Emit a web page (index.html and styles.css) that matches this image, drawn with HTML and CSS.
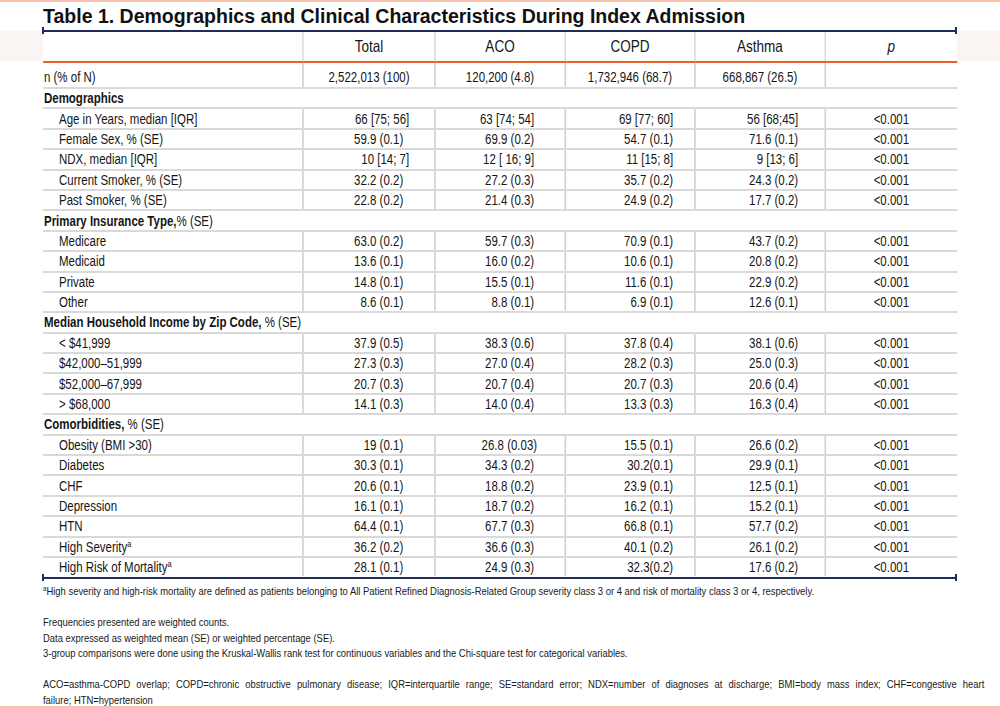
FILE: index.html
```html
<!DOCTYPE html>
<html lang="en">
<head>
<meta charset="utf-8">
<title>Table 1</title>
<link rel="stylesheet" href="styles.css">
</head>
<body>
<div class="page">
  <h1 class="title">Table 1. Demographics and Clinical Characteristics During Index Admission</h1>
  <div class="rule rule-top"></div>
  <div class="table-box">
  <table class="data">
    <colgroup>
      <col class="c-label"><col class="c-num"><col class="c-num2"><col class="c-num2"><col class="c-num2"><col class="c-num">
    </colgroup>
    <thead>
      <tr>
        <th></th>
        <th>Total</th>
        <th>ACO</th>
        <th>COPD</th>
        <th>Asthma</th>
        <th><i>p</i></th>
      </tr>
    </thead>
    <tbody>
      <tr class="n-row">
        <td class="lbl flush">n (% of N)</td>
        <td>2,522,013 (100)</td>
        <td>120,200 (4.8)</td>
        <td>1,732,946 (68.7)</td>
        <td>668,867 (26.5)</td>
        <td></td>
      </tr>
      <tr class="sec"><td colspan="6"><b>Demographics</b></td></tr>
      <tr><td class="lbl">Age in Years, median [IQR]</td><td class="v1 off">66 [75; 56]</td><td class="v2">63 [74; 54]</td><td class="v3">69 [77; 60]</td><td class="v4">56 [68;45]</td><td class="pv">&lt;0.001</td></tr>
      <tr><td class="lbl">Female Sex, % (SE)</td><td class="v1">59.9 (0.1)</td><td class="v2">69.9 (0.2)</td><td class="v3">54.7 (0.1)</td><td class="v4">71.6 (0.1)</td><td class="pv">&lt;0.001</td></tr>
      <tr><td class="lbl">NDX, median [IQR]</td><td class="v1 off">10 [14; 7]</td><td class="v2">12 [ 16; 9]</td><td class="v3">11 [15; 8]</td><td class="v4">9 [13; 6]</td><td class="pv">&lt;0.001</td></tr>
      <tr><td class="lbl">Current Smoker, % (SE)</td><td class="v1">32.2 (0.2)</td><td class="v2">27.2 (0.3)</td><td class="v3">35.7 (0.2)</td><td class="v4">24.3 (0.2)</td><td class="pv">&lt;0.001</td></tr>
      <tr><td class="lbl">Past Smoker, % (SE)</td><td class="v1">22.8 (0.2)</td><td class="v2">21.4 (0.3)</td><td class="v3">24.9 (0.2)</td><td class="v4">17.7 (0.2)</td><td class="pv">&lt;0.001</td></tr>
      <tr class="sec"><td colspan="6"><b>Primary Insurance Type,</b>% (SE)</td></tr>
      <tr><td class="lbl">Medicare</td><td class="v1">63.0 (0.2)</td><td class="v2">59.7 (0.3)</td><td class="v3">70.9 (0.1)</td><td class="v4">43.7 (0.2)</td><td class="pv">&lt;0.001</td></tr>
      <tr><td class="lbl">Medicaid</td><td class="v1">13.6 (0.1)</td><td class="v2">16.0 (0.2)</td><td class="v3">10.6 (0.1)</td><td class="v4">20.8 (0.2)</td><td class="pv">&lt;0.001</td></tr>
      <tr><td class="lbl">Private</td><td class="v1">14.8 (0.1)</td><td class="v2">15.5 (0.1)</td><td class="v3">11.6 (0.1)</td><td class="v4">22.9 (0.2)</td><td class="pv">&lt;0.001</td></tr>
      <tr><td class="lbl">Other</td><td class="v1">8.6 (0.1)</td><td class="v2">8.8 (0.1)</td><td class="v3">6.9 (0.1)</td><td class="v4">12.6 (0.1)</td><td class="pv">&lt;0.001</td></tr>
      <tr class="sec"><td colspan="6"><b>Median Household Income by Zip Code,</b> % (SE)</td></tr>
      <tr><td class="lbl">&lt; $41,999</td><td class="v1">37.9 (0.5)</td><td class="v2">38.3 (0.6)</td><td class="v3">37.8 (0.4)</td><td class="v4">38.1 (0.6)</td><td class="pv">&lt;0.001</td></tr>
      <tr><td class="lbl">$42,000–51,999</td><td class="v1">27.3 (0.3)</td><td class="v2">27.0 (0.4)</td><td class="v3">28.2 (0.3)</td><td class="v4">25.0 (0.3)</td><td class="pv">&lt;0.001</td></tr>
      <tr><td class="lbl">$52,000–67,999</td><td class="v1">20.7 (0.3)</td><td class="v2">20.7 (0.4)</td><td class="v3">20.7 (0.3)</td><td class="v4">20.6 (0.4)</td><td class="pv">&lt;0.001</td></tr>
      <tr><td class="lbl">&gt; $68,000</td><td class="v1">14.1 (0.3)</td><td class="v2">14.0 (0.4)</td><td class="v3">13.3 (0.3)</td><td class="v4">16.3 (0.4)</td><td class="pv">&lt;0.001</td></tr>
      <tr class="sec"><td colspan="6"><b>Comorbidities,</b> % (SE)</td></tr>
      <tr><td class="lbl">Obesity (BMI &gt;30)</td><td class="v1">19 (0.1)</td><td class="v2 off">26.8 (0.03)</td><td class="v3">15.5 (0.1)</td><td class="v4">26.6 (0.2)</td><td class="pv">&lt;0.001</td></tr>
      <tr><td class="lbl">Diabetes</td><td class="v1">30.3 (0.1)</td><td class="v2">34.3 (0.2)</td><td class="v3">30.2(0.1)</td><td class="v4">29.9 (0.1)</td><td class="pv">&lt;0.001</td></tr>
      <tr><td class="lbl">CHF</td><td class="v1">20.6 (0.1)</td><td class="v2">18.8 (0.2)</td><td class="v3">23.9 (0.1)</td><td class="v4">12.5 (0.1)</td><td class="pv">&lt;0.001</td></tr>
      <tr><td class="lbl">Depression</td><td class="v1">16.1 (0.1)</td><td class="v2">18.7 (0.2)</td><td class="v3">16.2 (0.1)</td><td class="v4">15.2 (0.1)</td><td class="pv">&lt;0.001</td></tr>
      <tr><td class="lbl">HTN</td><td class="v1">64.4 (0.1)</td><td class="v2">67.7 (0.3)</td><td class="v3">66.8 (0.1)</td><td class="v4">57.7 (0.2)</td><td class="pv">&lt;0.001</td></tr>
      <tr><td class="lbl">High Severity<sup>a</sup></td><td class="v1">36.2 (0.2)</td><td class="v2">36.6 (0.3)</td><td class="v3">40.1 (0.2)</td><td class="v4">26.1 (0.2)</td><td class="pv">&lt;0.001</td></tr>
      <tr class="last"><td class="lbl">High Risk of Mortality<sup>a</sup></td><td class="v1">28.1 (0.1)</td><td class="v2">24.9 (0.3)</td><td class="v3">32.3(0.2)</td><td class="v4">17.6 (0.2)</td><td class="pv">&lt;0.001</td></tr>
    </tbody>
  </table>
  </div>
  <div class="rule rule-bottom"></div>
  <div class="notes">
    <p><sup>a</sup>High severity and high-risk mortality are defined as patients belonging to All Patient Refined Diagnosis-Related Group severity class 3 or 4 and risk of mortality class 3 or 4, respectively.</p>
    <p>Frequencies presented are weighted counts.<br>Data expressed as weighted mean (SE) or weighted percentage (SE).<br>3-group comparisons were done using the Kruskal-Wallis rank test for continuous variables and the Chi-square test for categorical variables.</p>
    <p><span class="jline">ACO=asthma-COPD overlap; COPD=chronic obstructive pulmonary disease; IQR=interquartile range; SE=standard error; NDX=number of diagnoses at discharge; BMI=body mass index; CHF=congestive heart</span>failure; HTN=hypertension</p>
  </div>
</div>
</body>
</html>
```

FILE: styles.css
```css
html, body {
  margin: 0;
  padding: 0;
  background: #ffffff;
}

/* The reference uses a narrow grotesque (Arial Narrow–like).
   Liberation Sans condensed horizontally to 82% reproduces its widths. */
.page {
  width: 1000px;
  height: 708px;
  box-sizing: border-box;
  border-top: 2px solid #f8c2aa;
  border-bottom: 2px solid #f8c2aa;
  overflow: hidden;
  color: #151515;
  background:
    linear-gradient(to bottom, transparent 29px, #faf5f3 29px, #faf5f3 59px, transparent 59px);
  font-family: "Liberation Sans", Arial, sans-serif;
}

.title {
  margin: 3px 0 0 43px;
  font-weight: bold;
  font-size: 19.5px;
  line-height: 22px;
  color: #111;
}

.rule {
  position: relative;
  z-index: 1;
  margin-left: 42px;
  width: 915px;
  height: 7px;
  box-sizing: border-box;
  border-left: 2px solid #1f2b58;
  border-right: 2px solid #1f2b58;
  background: linear-gradient(#1f2b58, #1f2b58) center / 100% 2px no-repeat;
}

.rule-top {
  margin-bottom: -3px;
}

.rule-bottom {
  margin-top: -2px;
}

.table-box {
  margin-left: 43px;
  width: 1114.6px;
  transform: scaleX(0.82);
  transform-origin: 0 0;
}

.data {
  width: 1114.6px;
  border-collapse: collapse;
  table-layout: fixed;
  background: #ffffff;
  font-size: 14px;
}

.c-label { width: 317.1px; }
.c-num { width: 161px; }
.c-num2 { width: 158.5px; }

.data th {
  height: 30px;
  padding: 0;
  font-weight: normal;
  font-size: 16.5px;
  text-align: center;
  border-bottom: 2px solid #e8622c;
  border-left: 2px solid #e0dcdb;
}

.data th:first-child {
  border-left: none;
}

.data td {
  height: 18.4px;
  padding: 0;
  line-height: 16px;
  border-top: 2px solid #d9d9d9;
  border-left: 2.4px solid #d2d2d2;
  text-align: right;
  white-space: nowrap;
}

.data td:first-child {
  border-left: none;
}

.data tbody tr:first-child td {
  border-top: none;
}

.data .n-row td {
  height: 22px;
  text-align: center;
  vertical-align: bottom;
  padding-bottom: 2px;
}

.data .n-row td.lbl {
  text-align: left;
}

.data .sec td {
  text-align: left;
  padding-left: 1.2px;
}

.data td.lbl {
  text-align: left;
  padding-left: 19.5px;
}

.data td.flush {
  padding-left: 1.2px;
}

.data td.v1 { padding-right: 37.8px; }
.data td.v2 { padding-right: 36.6px; }
.data td.v3 { padding-right: 25.6px; }
.data td.v4 { padding-right: 31.7px; }
.data td.v1.off { padding-right: 30.5px; }
.data td.v2.off { padding-right: 33px; }

.data td.pv {
  text-align: center;
}

sup {
  font-size: 0.65em;
  line-height: 0;
  vertical-align: 0.5em;
}

.notes {
  margin: 3px 0 0 43px;
  width: 1160px;
  transform: scaleX(0.82);
  transform-origin: 0 0;
  font-size: 11.5px;
  line-height: 15.5px;
  color: #1a1a1a;
  white-space: nowrap;
}

.notes p {
  margin: 0 0 15.5px 0;
}

.notes .jline {
  display: block;
  width: 1148px;
  white-space: normal;
  text-align: justify;
  text-align-last: justify;
}
```
